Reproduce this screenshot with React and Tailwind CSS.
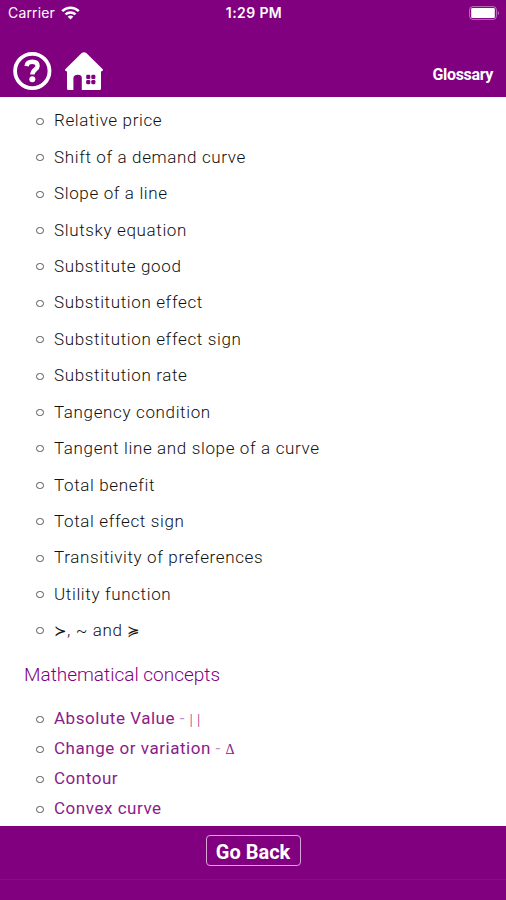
import React from 'react';

const terms = [
  'Relative price',
  'Shift of a demand curve',
  'Slope of a line',
  'Slutsky equation',
  'Substitute good',
  'Substitution effect',
  'Substitution effect sign',
  'Substitution rate',
  'Tangency condition',
  'Tangent line and slope of a curve',
  'Total benefit',
  'Total effect sign',
  'Transitivity of preferences',
  'Utility function',
];

const mathTerms = [
  { label: 'Absolute Value', symbol: '| |' },
  { label: 'Change or variation', symbol: 'Δ' },
  { label: 'Contour' },
  { label: 'Convex curve' },
];

function WifiIcon() {
  return (
    <svg width="19" height="14" viewBox="0 0 19 14" fill="none" stroke="white" strokeWidth="2.5">
      <path d="M1.2 5.2C5.8 .6 13.2 .6 17.8 5.2" />
      <path d="M4.5 8.4C7.3 5.7 11.7 5.7 14.5 8.4" />
      <path d="M9.5 13.6L6.7 10.7C8.2 9.2 10.8 9.2 12.3 10.7Z" fill="white" stroke="none" />
    </svg>
  );
}

function BatteryIcon() {
  return (
    <svg width="31" height="14" viewBox="0 0 31 14">
      <rect x=".6" y=".6" width="26.8" height="12.8" rx="3.2" fill="none" stroke="white" strokeOpacity=".45" />
      <rect x="2.2" y="2" width="23.6" height="10" rx="1.2" fill="white" />
      <path d="M28.8 4.7Q31 7 28.8 9.3Z" fill="white" fillOpacity=".5" />
    </svg>
  );
}

function HelpIcon() {
  return (
    <svg width="40" height="40" viewBox="0 0 40 40" fill="none" stroke="white">
      <circle cx="20.3" cy="20" r="17.2" strokeWidth="3.8" />
      <path d="M14.6 15.1C15.1 11.8 17.2 10.8 20.2 10.8C23.5 10.8 25.6 12.3 25.6 15C25.6 18.8 20.4 18.5 20.4 23.6" strokeWidth="4.4" />
      <circle cx="20.3" cy="28.3" r="3" fill="white" stroke="none" />
    </svg>
  );
}

function HomeIcon() {
  return (
    <svg width="40" height="40" viewBox="0 0 40 40">
      <path
        d="M1 18.6L17.7 2.1Q20 .2 22.3 2.1L39 18.6Q39.4 20.4 37 20.4V37.4Q37 39 35.4 39H17.8V27Q17.8 23.8 13.7 23.8Q9.4 23.8 9.4 27.4V39H4.4Q3 39 3 37.4V20.4Q.6 20.4 1 18.6Z"
        fill="white"
      />
      <g fill="#800080">
        <rect x="22.2" y="23.8" width="4.1" height="4.2" rx="1.3" />
        <rect x="27.3" y="23.8" width="4.1" height="4.2" rx="1.3" />
        <rect x="22.2" y="29" width="4.1" height="4.2" rx="1.3" />
        <rect x="27.3" y="29" width="4.1" height="4.2" rx="1.3" />
      </g>
    </svg>
  );
}

function Bullet() {
  return <span className="mr-[10px] h-[7px] w-2 shrink-0 rounded-full border border-[#555]" />;
}

export default function App() {
  return (
    <div className="flex h-[900px] w-[506px] flex-col overflow-hidden bg-white font-['Roboto','Noto_Sans',sans-serif]">
      <header className="h-[97px] shrink-0 bg-[#800080] text-white">
        <div className="grid h-[25px] grid-cols-3 items-center pr-[6px] pl-2 font-['Inter',sans-serif]">
          <div className="flex items-center gap-[6px] text-[14px] tracking-[0.15px]">
            <span>Carrier</span>
            <WifiIcon />
          </div>
          <span className="text-center text-[14px] font-semibold tracking-[0.4px] whitespace-nowrap">1:29 PM</span>
          <div className="flex justify-end">
            <BatteryIcon />
          </div>
        </div>
        <div className="flex h-[72px] items-start justify-between pt-[26px] pr-[13px] pl-3">
          <div className="flex gap-3">
            <HelpIcon />
            <HomeIcon />
          </div>
          <h1 className="mt-[13px] text-[16px] leading-[21px] font-bold tracking-[-0.35px]">Glossary</h1>
        </div>
      </header>

      <main className="min-h-0 flex-1 overflow-hidden pt-[6px]">
        <ul className="pl-9 text-[17px] font-light tracking-[0.64px] text-[#111]">
          {terms.map((term) => (
            <li key={term} className="flex h-[36.42px] items-center">
              <Bullet />
              <span>{term}</span>
            </li>
          ))}
          <li className="flex h-[36.42px] items-center">
            <Bullet />
            <span className="leading-6">
              <span className="font-['DejaVu_Sans',sans-serif] text-[15px] tracking-normal">≻</span>, ~ and{' '}
              <span className="font-['DejaVu_Sans',sans-serif] text-[15px] tracking-normal">≽</span>
            </span>
          </li>
        </ul>

        <h2 className="mt-[13px] pl-6 text-[19px] leading-[26px] font-light text-[#800080]">
          Mathematical concepts
        </h2>

        <ul className="mt-4 pl-9 text-[17px] tracking-[0.53px] text-[#8a1c8a]">
          {mathTerms.map(({ label, symbol }) => (
            <li key={label} className="flex h-[30px] items-center">
              <Bullet />
              <span>{label}</span>
              {symbol && (
                <span className="whitespace-pre">
                  <span className="opacity-50">{' - '}</span>
                  <span className="font-['Liberation_Serif',serif] text-[14px]">{symbol}</span>
                </span>
              )}
            </li>
          ))}
        </ul>
      </main>

      <footer className="flex h-[74px] shrink-0 flex-col bg-[#800080]">
        <div className="flex h-[54px] justify-center border-b border-[#870c87] pt-[9px]">
          <button className="h-[31px] w-[95px] rounded-[4px] border border-[#d9a6d9] text-[20px] leading-[32px] font-bold text-white">
            Go Back
          </button>
        </div>
      </footer>
    </div>
  );
}
